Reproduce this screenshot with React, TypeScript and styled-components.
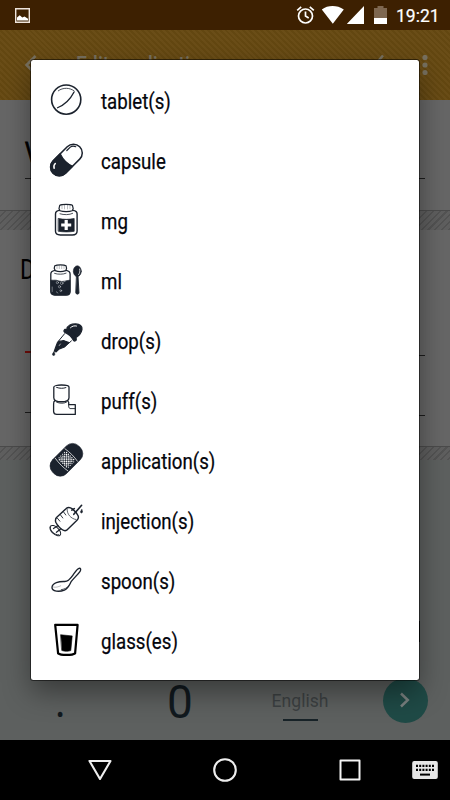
import React from "react";
import styled, { createGlobalStyle } from "styled-components";

const Global = createGlobalStyle`
  * { box-sizing: border-box; }
  body { margin: 0; background: #000; }
`;

const INK = "#1b222d";

const Screen = styled.div`
  position: relative;
  width: 450px;
  height: 800px;
  overflow: hidden;
  display: flex;
  flex-direction: column;
  font-family: Roboto, sans-serif;
`;

const StatusBar = styled.header`
  height: 30px;
  flex: none;
  display: flex;
  align-items: center;
  justify-content: space-between;
  padding: 0 10px 0 14px;
  background: #3d2001;
  color: #fff;
`;

const StatusIcons = styled.div`
  display: flex;
  align-items: center;
`;

const Clock = styled.span`
  width: 44px;
  margin-left: 9px;
  font-size: 17.5px;
  -webkit-text-stroke: 0.2px #fff;
  line-height: 30px;
  padding-top: 1px;
`;

const Toolbar = styled.div`
  height: 70px;
  flex: none;
  display: flex;
  align-items: center;
  padding: 0 22px 0 24px;
  background: repeating-linear-gradient(45deg, #6a4d17 0 2.1px, #634711 2.1px 4.2px);
  color: #77705f;
`;

const Title = styled.div`
  flex: 1;
  margin-left: 34px;
  font-size: 23px;
  font-weight: 500;
  transform: scaleX(0.85);
  transform-origin: left;
`;

const DoneIcon = styled.svg`
  width: 26px;
  height: 20px;
  margin-right: 37px;
`;

const Condensed = styled.span<{ $size: number; $stroke?: number }>`
  display: inline-block;
  font-size: ${(p) => p.$size}px;
  -webkit-text-stroke: ${(p) => p.$stroke || 0}px currentColor;
  transform: scaleX(0.83);
  transform-origin: left center;
  white-space: nowrap;
`;

const OptionLabel = styled(Condensed)`
  padding-top: 2px;
`;

const Card = styled.section<{ $height: number; $pad: number }>`
  height: ${(p) => p.$height}px;
  flex: none;
  padding: ${(p) => p.$pad}px 25px 0;
  background: #666;
  color: #000;
`;

const CardTitle = styled.h2`
  margin: 0 0 0 -5px;
  height: 30px;
  line-height: 30px;
  font-weight: 400;
`;

const Field = styled.div<{ $height: number; $color?: string }>`
  height: ${(p) => p.$height}px;
  line-height: 30px;
  border-bottom: ${(p) => (p.$color ? 2.5 : 1)}px solid ${(p) => p.$color || "#1c1c1c"};
`;

const FieldPair = styled.div<{ $height: number }>`
  display: flex;
  align-items: flex-start;
  height: ${(p) => p.$height}px;
  & > div { flex: 1; }
`;

const Hatch = styled.div<{ $height: number }>`
  height: ${(p) => p.$height}px;
  flex: none;
  border-top: 1px solid #4b4b4b;
  background: repeating-linear-gradient(135deg, #5f5f5f 0 3.3px, #535353 3.3px 4.8px);
`;

const Keypad = styled.section`
  flex: 1;
  display: grid;
  grid-template-columns: 120px 120px 120px 90px;
  align-content: end;
  align-items: center;
  justify-items: center;
  background: #5d605f;
`;

const Backspace = styled.div`
  grid-column: 4;
  width: 30px;
  height: 21px;
  margin-bottom: 18px;
  background: #080c0e;
`;

const Key = styled.div`
  height: 80px;
  line-height: 84px;
  font-size: 46px;
  color: #11191e;
`;

const DotKey = styled(Key)`
  font-family: "Noto Sans", sans-serif;
  font-size: 38px;
  line-height: 84px;
`;

const SpaceKey = styled.div`
  display: flex;
  flex-direction: column;
  align-items: center;
  height: 80px;
  padding-top: 30px;
  font-size: 17.6px;
  line-height: 22px;
  color: #3c4042;
  &::after {
    content: "";
    width: 35px;
    height: 2px;
    margin-top: 7px;
    background: #182328;
  }
`;

const NextKey = styled.div`
  width: 45px;
  height: 45px;
  border-radius: 50%;
  display: flex;
  align-items: center;
  justify-content: center;
  background: #1f4a46;
`;

const NavBar = styled.nav`
  height: 60px;
  flex: none;
  display: grid;
  grid-template-columns: 50px 100px 150px 100px 50px;
  align-items: center;
  justify-items: center;
  background: #000;
`;

const Dialog = styled.ul`
  position: absolute;
  left: 31px;
  top: 60px;
  width: 388px;
  height: 620px;
  margin: 0;
  padding: 10px 0;
  list-style: none;
  background: #fff;
  border-radius: 2.5px;
  box-shadow: 0 0 0 1px rgba(0, 0, 0, 0.5), 0 12px 28px rgba(0, 0, 0, 0.4);
`;

const Option = styled.li`
  height: 60px;
  display: flex;
  align-items: center;
  gap: 17px;
  padding: 0 17px;
  color: #04050c;
`;

const Icon = styled.svg`
  width: 36px;
  height: 36px;
  flex: none;
  fill: none;
  stroke: ${INK};
  stroke-width: 1.2;
  stroke-linecap: round;
  stroke-linejoin: round;
`;

const Tablet = () => (
  <Icon viewBox="0 0 36 36">
    <circle cx="18.2" cy="17.6" r="14.6" strokeWidth="1.6" />
    <path d="M9.5 25.8c6.5-2.7 13-9 16.5-15.7" />
    <path d="M10.3 8.8c4.5-3.5 11.8-3.4 16 .3" strokeWidth=".8" />
  </Icon>
);

const Capsule = () => (
  <Icon viewBox="0 0 36 36">
    <g transform="translate(18.4 18) rotate(-45)">
      <rect x="-18.8" y="-8.8" width="37.6" height="17.6" rx="8.8" strokeWidth="1.5" />
      <path d="M0-8.8h-10a8.8 8.8 0 0 0 0 17.6H0c-2-5-2-12 0-17.6z" fill={INK} />
      <path d="M7-6.4h4.5c2.3.2 3.8 1.7 4.5 3.6" strokeWidth="1.2" />
      <path d="M-14.5-2.8c.8-1.6 2.4-2.6 4.2-2.6" stroke="#fff" strokeWidth="1.5" />
    </g>
  </Icon>
);

const PillBottle = () => (
  <Icon viewBox="0 0 36 36">
    <path d="M11.8 3.2c2-1.1 10.6-1.1 12.6 0l.8 3.5-1 2.1c-3 1.1-9 1.1-12.2 0l-1-2.1z" />
    <path d="M14 3.5v3.2M16.5 3.3v3.6M19.5 3.3v3.6M22 3.5v3.2" strokeWidth=".3" />
    <path d="M11.5 8.4c-2.8.3-4 1.7-4 3.6v17.2c0 2.5 1.8 3.6 4.8 3.8h12c3 0 4.8-1.5 4.8-4V12c0-2-1.4-3.3-4.2-3.6" strokeWidth="1.4" />
    <path d="M12 11.8c4 1.3 9.5 1.1 12.6-.4" strokeWidth=".8" />
    <path d="M10.5 16.5c5 1.1 10.5 1.1 15.7 0v12.8c-5 .8-10.5.8-15.7 0z" fill={INK} strokeWidth=".7" />
    <path d="M18.2 18v10M13.2 23h10" stroke="#fff" strokeWidth="3.2" strokeLinecap="butt" />
  </Icon>
);

const LiquidBottle = () => (
  <Icon viewBox="0 0 36 36">
    <path d="M6.8 3.7c2-1 9.4-1 11.2 0l.6 2.6-.8 2.3c-3 1-8 1-10.6 0l-1-2.3z" />
    <path d="M9 4v2.5M11.3 3.8v2.8M13.7 3.8v2.8M16 4v2.5" strokeWidth=".3" />
    <path d="M6.8 8.4C4 9 2.8 10.3 2.8 12v17.5c0 2.4 1.6 3.4 4 3.6h11.4c2.4 0 3.9-1.3 3.9-3.6V12c0-2-1.2-3-3.8-3.6" strokeWidth="1.3" />
    <path d="M6.6 11.4c3.5 1.2 8.5 1.1 11.5-.2" strokeWidth=".8" />
    <path d="M3 18.2c4 .2 5-.5 8 .8 4 1.4 7-.7 11-.8v11c0 2.5-1.5 3.7-4 3.7H6.9C4.3 32.9 3 31.7 3 29.5z" fill={INK} strokeWidth=".7" />
    <g stroke="#cfd2d6" strokeWidth=".5">
      <circle cx="9.4" cy="20.6" r="1.1" />
      <circle cx="13.7" cy="21.2" r="1.3" />
      <circle cx="11.5" cy="24.7" r="1.1" />
      <circle cx="12.8" cy="28.7" r=".9" />
      <path d="M8.3 29.8l1.6 1.2M15.7 19.9l1.5-.6M4.2 25v4.5" />
    </g>
    <ellipse cx="29.3" cy="9.2" rx="4" ry="5.4" fill={INK} strokeWidth=".6" />
    <path d="M28.8 14.3h1.2l1 16.8c-.3 1.4-3 1.4-3.2 0z" fill={INK} strokeWidth=".9" />
    <path d="M31.7 7.1c.5 2.4 0 4-1.1 5.5" stroke="#fff" strokeWidth=".8" />
  </Icon>
);

const Dropper = () => (
  <Icon viewBox="0 0 36 36">
    <path d="M18.8 7.4c.5-3.9 4.7-5.7 9-5.5 4 .1 6.7 2.2 6.2 5.4-.6 4-4 7.3-7.7 8.9z" fill={INK} />
    <path d="M16.8 7.4c-1.6 1.5-.9 2.6.7 3.2 3.1 1.5 6.1 3.9 7.7 7.4.8 1.8 3.2 1.2 3.1-.8-.1-4.6-6-10.4-11.5-9.8z" fill={INK} />
    <path d="M16.7 11.6l-6.8 8.2M23.4 18.9l-6.5 5.8" strokeWidth="1" />
    <path d="M11.4 19c2 .9 3.7-1.2 5.4.1 1.3.7 2.4 1.2 3.7 1.3l-4.7 4.9-5.1 2-2.6 2.6-1.7-1 1.3-3.7 1.6-4.2z" fill={INK} />
    <path d="M11.2 23.6l1.2-1.6" stroke="#fff" strokeWidth=".6" />
    <path d="M6 29.8c-2.5 2.4-1.5 3.8-.3 3.7 1.4 0 1.6-1.5.3-3.7z" fill={INK} strokeWidth=".5" />
    <path d="M22.5 5.7c1.6-1.7 4-2.2 6-1.7" stroke="#fff" strokeWidth="1" />
  </Icon>
);

const Inhaler = () => (
  <Icon viewBox="0 0 36 36">
    <path d="M5.8 5.1c0-2.8 15.2-2.8 15.2 0v10.6c0 5.4-15.2 5.4-15.2 0z" strokeWidth="1.3" />
    <path d="M8.6 5.4c3.2 1.2 6.5 1.2 9.3.2" strokeWidth="1" />
    <path d="M7 18.7c-1.3.6-1.5 2-1.4 3.6v7.2c.1 2 1.4 2.9 3.2 2.9h18.5v-9.7h-6.6c.4-1.9-.1-3.3-1.1-4" strokeWidth="1.3" />
    <path d="M8.4 20c3.3 1.7 7.6 1.7 10.3 0M20.7 23c-.2 1.8.1 3 1.3 3.6h5" strokeWidth=".9" />
  </Icon>
);

const meshRows = [-5, -2.5, 0, 2.5, 5];

const Plaster = () => (
  <Icon viewBox="0 0 36 36">
    <g transform="translate(18.4 17.8) rotate(-45)">
      <rect x="-18.5" y="-9.8" width="37" height="19.6" rx="8.7" fill={INK} strokeWidth=".6" />
      <path d="M-6.8-8.8c-1 6-1 12 0 17.6M6.8-8.8c1 6 1 12 0 17.6" stroke="#fff" strokeWidth=".7" />
      <g stroke="#fff" strokeWidth="1.35" strokeDasharray=".1 2.45">
        {meshRows.map((y) => <path key={y} d={`M-5 ${y}H5.5`} />)}
        {meshRows.slice(0, 4).map((y) => <path key={y} d={`M-3.8 ${y + 1.25}H4.5`} />)}
      </g>
      <path d="M-3.8-6.6h8M-3.8 6.6h8" stroke="#fff" strokeWidth="1.1" strokeDasharray=".1 2.4" />
    </g>
  </Icon>
);

const Syringe = () => (
  <Icon viewBox="0 0 36 36">
    <path d="M8.5 15.5L18.3 6.4c2-1.5 4.1-1 6 .5 2.5 2 4.6 4.2 5.8 6.8.8 2 .2 3.4-1.1 4.6l-10.3 9.9c-2 1.2-4 .1-5.8-1.4-2.3-1.8-4-3.8-5.1-6.5-.7-2-.3-3.5.7-4.8z" strokeWidth="1.4" />
    <path d="M19.2 7.5c-.4 4.3 3.6 9.3 8.7 10" strokeWidth=".7" />
    <path d="M9.2 16l2.7 3.2M12.4 12.8l2.4 3.2M15.6 10l2.2 3" strokeWidth=".9" />
    <path d="M23.8 8.1l2.5-1.5M25.8 12.3l7.8-9" strokeWidth="1.6" />
    <path d="M33.8 7.8c-1.9 2-1.2 3.1-.3 3.1s1.5-1.2.3-3.1z" fill={INK} strokeWidth=".7" />
    <path d="M10.1 23.5l-4.6 3.1M12.9 26.8l-4.5 3.5" />
    <ellipse cx="7.3" cy="28.6" rx="6.6" ry="3.5" transform="rotate(43 7.3 28.6)" strokeWidth="1" />
    <path d="M2.4 25.2c-.9 3.2 4 8 8.3 7.6" strokeWidth=".9" />
  </Icon>
);

const Spoon = () => (
  <Icon viewBox="0 0 36 36">
    <path d="M4 25.3c.4-4.5 7-6 12.6-5.8 4.2.2 6.5-3.9 9.4-7.9 1.7-2.4 3.3-4.8 5-5.3 1.7-.3 2.2 1.4 1.1 3-2.8 4-6.6 7.1-9 10.4-1.4 2.6-2.7 6.7-6.7 8.4C11.7 30 3.8 29.9 4 25.3z" strokeWidth="1.35" />
    <path d="M13.2 27.7c3-.5 5.5-1.5 7.4-3.6" strokeWidth=".8" />
    <path d="M5.2 25c3 .8 5-.2 7.5-1.2" strokeWidth=".3" />
  </Icon>
);

const Glass = () => (
  <Icon viewBox="0 0 36 36">
    <path d="M7.2 2.9h22.4l-2.5 28.4c-2.8 2.2-14.4 2.2-17 0z" stroke="#000" strokeWidth="2.2" />
    <path d="M12.8 12.8l11.4 1.1-1.4 14.7c-2.3.9-6.6.9-8.8 0z" fill="#000" stroke="#000" strokeWidth=".6" />
  </Icon>
);

const options: [string, React.FC][] = [
  ["tablet(s)", Tablet],
  ["capsule", Capsule],
  ["mg", PillBottle],
  ["ml", LiquidBottle],
  ["drop(s)", Dropper],
  ["puff(s)", Inhaler],
  ["application(s)", Plaster],
  ["injection(s)", Syringe],
  ["spoon(s)", Spoon],
  ["glass(es)", Glass],
];

const keyColumns = [4, 7.2, 10.4, 13.6, 16.8, 20];

export default function App() {
  return (
    <Screen>
      <Global />
      <StatusBar>
        <svg width="17" height="17" viewBox="0 0 17 17">
          <path d="M1.7 1.7h13.6v13.6H1.7z" fill="none" stroke="#eee4dc" strokeWidth="1.4" />
          <path d="M3 13.5v-3l2.7-2.2 2.6 2.3 2.2-1 3.5 2.2v1.7z" fill="#fff" />
        </svg>
        <StatusIcons>
          <svg width="19" height="20" viewBox="0 0 19 20" fill="none" stroke="#fff" strokeWidth="1.7">
            <circle cx="9.5" cy="11" r="7" />
            <path d="M1.2 5.3l4-3.4M17.8 5.3l-4-3.4M9.5 6.5V11l3.2 2" />
          </svg>
          <svg width="49" height="20" viewBox="0 0 49 20" fill="#fff">
            <path d="M6.8 4.5C13-.1 22-.1 28.8 4.5L17.8 18.8zM49 1v18H31.8z" />
          </svg>
          <svg width="23" height="20" viewBox="0 0 23 20">
            <path d="M13.5 1h6v2H23v10H10V3h3.5z" fill="#7e6750" />
            <path d="M10 13h13v6H10z" fill="#fff" />
          </svg>
          <Clock>19:21</Clock>
        </StatusIcons>
      </StatusBar>

      <Toolbar>
        <svg width="18" height="20" viewBox="0 0 18 20" fill="none" stroke="#77705f" strokeWidth="2.5">
          <path d="M11.5 1L2.5 10l9 9" />
        </svg>
        <Title>Edit medication</Title>
        <DoneIcon viewBox="0 0 26 20" fill="none" stroke="#77705f" strokeWidth="2.5">
          <path d="M3 12l6 6L24 .5" />
        </DoneIcon>
        <svg width="6" height="20" viewBox="0 0 6 20" fill="#77705f">
          <circle cx="3" cy="2.5" r="2.6" />
          <circle cx="3" cy="10" r="2.6" />
          <circle cx="3" cy="17.5" r="2.6" />
        </svg>
      </Toolbar>

      <Card $height={110} $pad={38}>
        <Field $height={41}><Condensed $size={27} $stroke={0.8}>V</Condensed></Field>
      </Card>
      <Hatch $height={20} />
      <Card $height={216} $pad={25}>
        <CardTitle><Condensed $size={28}>D</Condensed></CardTitle>
        <FieldPair $height={68}>
          <Field $height={68} $color="#720d0a" />
          <Field $height={71} />
        </FieldPair>
        <FieldPair $height={63}>
          <Field $height={60} />
          <Field $height={63} />
        </FieldPair>
      </Card>
      <Hatch $height={14} />

      <Keypad>
        <Backspace />
        <DotKey>.</DotKey>
        <Key>0</Key>
        <SpaceKey>English</SpaceKey>
        <NextKey>
          <svg width="12" height="18" viewBox="0 0 12 18" fill="none" stroke="#79807f" strokeWidth="2.5">
            <path d="M2 2.5L8.8 9 2 15.5" />
          </svg>
        </NextKey>
      </Keypad>

      <NavBar>
        <span />
        <svg width="24" height="22" viewBox="0 0 24 22" fill="none" stroke="#eee" strokeWidth="2.1" strokeLinejoin="round">
          <path d="M1.5 2h21L12 20z" />
        </svg>
        <svg width="24" height="24" viewBox="0 0 24 24" fill="none" stroke="#eee" strokeWidth="2.1">
          <circle cx="12" cy="12" r="10.8" />
        </svg>
        <svg width="22" height="22" viewBox="0 0 22 22" fill="none" stroke="#f4f4f4" strokeWidth="2" strokeLinejoin="round">
          <path d="M1.5 1.5h19v19h-19z" />
        </svg>
        <svg width="26" height="18" viewBox="0 0 26 18">
          <rect x=".2" width="25.6" height="18" rx="2" fill="#e6e6e6" />
          {keyColumns.map((x) => (
            <path key={x} d={`M${x} 3.7h2v2.2h-2zM${x} 7.7h2v2.2h-2z`} fill="#000" />
          ))}
          <path d="M8 12.6h10v2H8z" fill="#000" />
        </svg>
      </NavBar>

      <Dialog>
        {options.map(([label, Drawing]) => (
          <Option key={label}>
            <Drawing />
            <OptionLabel $size={22.5} $stroke={0.25}>{label}</OptionLabel>
          </Option>
        ))}
      </Dialog>
    </Screen>
  );
}
